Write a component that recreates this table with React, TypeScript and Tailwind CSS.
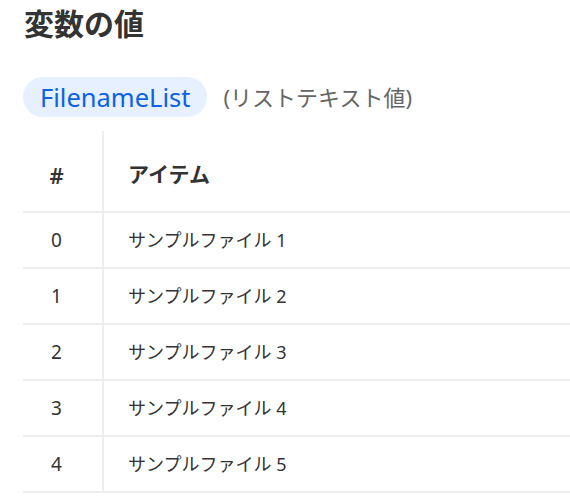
const font = { fontFamily: '"Segoe UI", "Noto Sans", "Noto Sans CJK JP", sans-serif' };

const items = ['サンプルファイル 1', 'サンプルファイル 2', 'サンプルファイル 3', 'サンプルファイル 4', 'サンプルファイル 5'];

export default function App() {
  return (
    <div className="min-h-screen bg-white pl-[23px] pt-[3px] text-[#333]" style={font}>
      <h1 className="text-[30px] font-bold leading-[42px] pl-px">変数の値</h1>

      <div className="mt-[32px] flex items-center gap-4">
        <span className="rounded-full bg-[#e6f0fe] px-[17px] h-[40px] flex items-center text-[25.5px] text-[#0b62e3]">
          FilenameList
        </span>
        <span className="text-[22px] text-[#666]">(リストテキスト値)</span>
      </div>

      <table className="mt-[14px] w-full border-collapse">
        <thead>
          <tr className="border-b-2 border-[#eeeeee]">
            <th className="w-[80px] h-[81px] pt-2 pr-[12px] text-center text-[22px] font-semibold border-r-2 border-[#eeeeee]">#</th>
            <th className="h-[81px] pt-2 pl-[24px] text-left text-[21px] font-bold">アイテム</th>
          </tr>
        </thead>
        <tbody>
          {items.map((item, i) => (
            <tr key={i} className="border-b-2 border-[#eeeeee]">
              <td className="h-[56px] pr-[12px] text-center text-[19px] border-r-2 border-[#eeeeee]">{i}</td>
              <td className="h-[56px] pl-[24px] text-[18px]">{item}</td>
            </tr>
          ))}
        </tbody>
      </table>
    </div>
  );
}
